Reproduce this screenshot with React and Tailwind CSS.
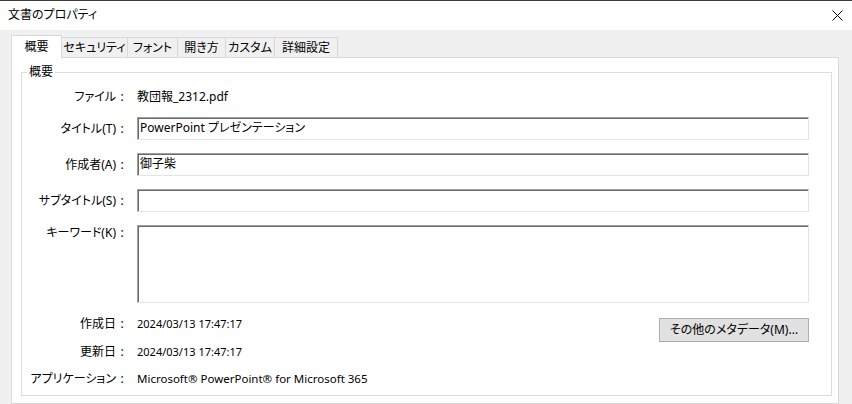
import React from "react";

const tabs = [
  { label: "概要", w: "w-[51px]", active: true },
  { label: "セキュリティ", w: "w-[66px]" },
  { label: "フォント", w: "w-[50px]" },
  { label: "開き方", w: "w-[48px]" },
  { label: "カスタム", w: "w-[49px]" },
  { label: "詳細設定", w: "w-[63px]" },
];

function Label({ children, className = "" }) {
  return (
    <div className={`w-[106px] shrink-0 flex justify-end whitespace-nowrap ${className}`}>
      <span>{children}</span>
      <span className="w-[12px] text-center [font-feature-settings:normal]">:</span>
    </div>
  );
}

function Input({ value = "", tall = false }) {
  return (
    <div
      className={`w-[672px] ${tall ? "h-[78px]" : "h-[23px]"} bg-white border border-t-[#a0a0a0] border-l-[#a0a0a0] border-r-[#e3e3e3] border-b-[#e3e3e3] shadow-[inset_1px_1px_0_#696969] pl-[2px] leading-[20px] whitespace-nowrap`}
    >
      {value}
    </div>
  );
}

export default function App() {
  return (
    <div className="w-[852px] h-[404px] overflow-hidden bg-[#f0f0f0] text-[12px] text-black font-['Noto_Sans','Noto_Sans_CJK_JP',sans-serif] [font-feature-settings:'palt'] flex flex-col">
      <div className="h-px bg-[#3c3c3c] shrink-0" />
      <div className="h-[29px] bg-white shrink-0 flex items-center justify-between pl-[8px] pr-[9px]">
        <span className="leading-[16px] -mt-[1px]">文書のプロパティ</span>
        <svg width="11" height="11" viewBox="0 0 11 11" className="-mt-[1px]">
          <path d="M0.5 0.5 L10.5 10.5 M10.5 0.5 L0.5 10.5" stroke="#000" strokeWidth="1" />
        </svg>
      </div>
      <div className="flex-1 flex flex-col pl-[11px] pr-[13px] pt-[5px]">
        <div className="flex items-end h-[23px] -mb-px relative z-10">
          {tabs.map((t) =>
            t.active ? (
              <div
                key={t.label}
                className={`${t.w} h-[23px] bg-white border border-b-0 border-[#d9d9d9] flex items-center justify-center pb-[1px] whitespace-nowrap`}
              >
                {t.label}
              </div>
            ) : (
              <div
                key={t.label}
                className={`${t.w} h-[21px] bg-[#f0f0f0] border border-l-0 border-[#d9d9d9] flex items-center justify-center whitespace-nowrap`}
              >
                {t.label}
              </div>
            )
          )}
        </div>
        <div className="flex-1 bg-white border border-[#d9d9d9] pl-[9px] pr-[6px] pt-[14px]">
          <div className="relative border border-[#dcdcdc] h-[324px] flex flex-col">
            <div className="absolute -top-[9px] left-[5px] bg-white px-[2px] leading-[16px]">
              概要
            </div>
            <div className="flex items-center h-[20px] mt-[14px] gap-[9px]">
              <Label>ファイル</Label>
              <div>教団報_2312.pdf</div>
            </div>
            <div className="flex items-center mt-[10px] gap-[9px]">
              <Label>タイトル(T)</Label>
              <Input value="PowerPoint プレゼンテーション" />
            </div>
            <div className="flex items-center mt-[13px] gap-[9px]">
              <Label>作成者(A)</Label>
              <Input value="御子柴" />
            </div>
            <div className="flex items-center mt-[13px] gap-[9px]">
              <Label>サブタイトル(S)</Label>
              <Input />
            </div>
            <div className="flex items-start mt-[13px] gap-[9px]">
              <Label className="leading-[16px]">キーワード(K)</Label>
              <Input tall />
            </div>
            <div className="flex items-start mt-[11px] gap-[9px]">
              <Label className="leading-[20px]">作成日</Label>
              <div className="leading-[20px] flex-1 text-[11px]">2024/03/13 17:47:17</div>
              <button className="mt-[4px] mr-[22px] w-[150px] h-[24px] bg-[#e1e1e1] border border-[#adadad] flex items-center justify-center leading-[16px]">
                その他のメタデータ(M)...
              </button>
            </div>
            <div className="flex items-center h-[20px] gap-[9px]">
              <Label>更新日</Label>
              <div className="text-[11px]">2024/03/13 17:47:17</div>
            </div>
            <div className="flex items-center h-[20px] mt-[7px] gap-[9px]">
              <Label>アプリケーション</Label>
              <div className="text-[11.5px]">Microsoft® PowerPoint® for Microsoft 365</div>
            </div>
          </div>
        </div>
      </div>
    </div>
  );
}
